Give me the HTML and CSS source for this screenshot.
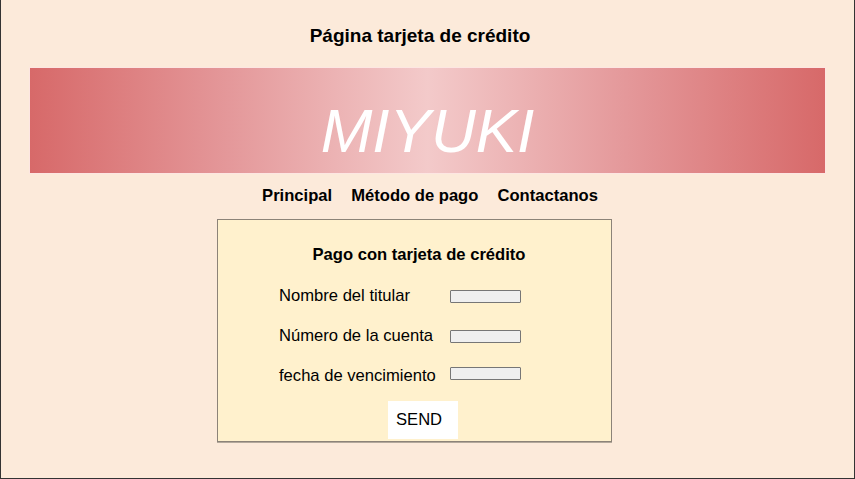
FILE: index.html
```html
<!DOCTYPE html>
<html lang="es">
<head>
<meta charset="utf-8">
<title>Página tarjeta de crédito</title>
<link rel="stylesheet" href="styles.css">
</head>
<body>
  <h1 class="page-title">Página tarjeta de crédito</h1>
  <header class="banner">
    <span class="brand">MIYUKI</span>
  </header>
  <nav class="nav">
    <a href="#">Principal</a>
    <a href="#">Método de pago</a>
    <a href="#">Contactanos</a>
  </nav>
  <form class="card-form">
    <h2 class="form-title">Pago con tarjeta de crédito</h2>
    <div class="fields">
      <label class="label" for="n">Nombre del titular</label>
      <input class="field" id="n" type="text">
      <label class="label" for="c">Número de la cuenta</label>
      <input class="field" id="c" type="text">
      <label class="label" for="f">fecha de vencimiento</label>
      <input class="field field-raised" id="f" type="text">
    </div>
    <button class="send" type="button">SEND</button>
  </form>
</body>
</html>
```

FILE: styles.css
```css
html {
  height: 100%;
}

body {
  margin: 0;
  height: 479px;
  box-sizing: border-box;
  border: 1px solid #333;
  border-top: none;
  background: #fceada;
  font-family: "Liberation Sans", Arial, sans-serif;
  color: #000;
  overflow: hidden;
}

.page-title {
  margin: 25px 0 0;
  padding-right: 15px;
  font-size: 19px;
  line-height: 22px;
  font-weight: bold;
  text-align: center;
}

.banner {
  margin: 20px 0 0 28px;
  width: 797px;
  height: 107px;
  box-sizing: border-box;
  border: 1px solid #fde6e2;
  background: linear-gradient(90deg, #d76969 0%, #e4989a 25%, #f3caca 50%, #e4989a 75%, #d76969 100%);
  padding-top: 27px;
  text-align: center;
}

.brand {
  display: block;
  color: #fff;
  font-style: italic;
  font-size: 62px;
  line-height: 71px;
}

.nav {
  margin-top: 12px;
  padding-left: 5px;
  display: flex;
  justify-content: center;
  gap: 19px;
  font-size: 16.6px;
  line-height: 20px;
  font-weight: bold;
}

.nav a {
  color: #000;
  text-decoration: none;
}

.card-form {
  margin: 13px 0 0 216px;
  width: 395px;
  box-sizing: border-box;
  border: 1px solid #8c8378;
  box-shadow: 0 1px 0 #b3a89b;
  background: #fff1cd;
  padding: 25px 0 2px;
  font-size: 16.6px;
  line-height: 20px;
}

.form-title {
  margin: 0;
  padding-left: 9px;
  font-size: 16.6px;
  line-height: 20px;
  font-weight: bold;
  text-align: center;
}

.fields {
  margin-top: 21px;
  padding-left: 61px;
  display: grid;
  grid-template-columns: 171px 71px;
  row-gap: 20px;
  align-items: center;
}

.label {
  line-height: 20px;
}

.field {
  width: 71px;
  height: 13px;
  box-sizing: border-box;
  margin: 0;
  padding: 0;
  border: 1px solid #767676;
  border-radius: 1px;
  background: #efefef;
}

.field-raised {
  position: relative;
  top: -3px;
}

.send {
  display: block;
  margin: 15px 0 0 170px;
  width: 70px;
  height: 38px;
  padding: 0 16px 0 8px;
  border: none;
  background: #fff;
  font-family: "Liberation Sans", Arial, sans-serif;
  font-size: 16.6px;
  color: #000;
  text-align: left;
}
```
